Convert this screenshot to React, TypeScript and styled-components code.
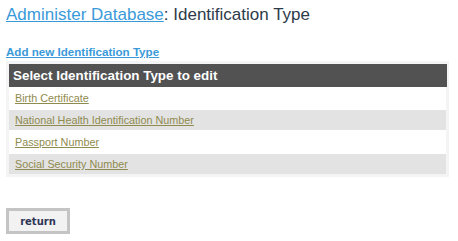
import styled, { createGlobalStyle } from 'styled-components'

const GlobalStyle = createGlobalStyle`
    body{
        margin: 0;
        background: #fff;
        font-family: "Liberation Sans", Arial, sans-serif;
    }
`

const Page = styled.div`
    padding: 4px 6px 0 6px;
    width: 443px;
`

const Title = styled.h1`
    margin: 0;
    font-size: 17px;
    font-weight: normal;
    line-height: 22px;
    color: #2d3a4a;

    a{
        color: #3a9ad9;
        text-decoration: underline;
    }
`

const AddLink = styled.a`
    display: block;
    width: max-content;
    margin-top: 19px;
    font-size: 11.6px;
    font-weight: bold;
    line-height: 14px;
    color: #3a9ad9;
    text-decoration: underline;
`

const ListBox = styled.div`
    margin-top: 2px;
    background: #f4f4f4;
    padding: 3px;
`

const ListHeader = styled.div`
    background: #525252;
    color: #fff;
    font-size: 13.4px;
    font-weight: bold;
    height: 23px;
    line-height: 23px;
    padding-left: 4px;
    margin-right: -1px;
`

const Row = styled.div<{ $odd: boolean }>`
    background: ${p => p.$odd ? '#e3e3e3' : '#fff'};
    height: ${p => p.$odd ? '20px' : '23px'};
    line-height: ${p => p.$odd ? '20px' : '23px'};
    padding-left: 6px;
    font-size: 10.8px;

    &:nth-child(4){
        height: 24px;
        line-height: 24px;
    }

    a{
        color: #8f8a4e;
        text-decoration: underline;
    }
`

const ReturnButton = styled.button`
    margin-top: 31px;
    width: 64px;
    height: 26px;
    background: #f2f2f2;
    border: 3px solid #c4c4c4;
    font-family: "DejaVu Sans", Verdana, sans-serif;
    font-size: 10px;
    font-weight: bold;
    color: #2f3556;
    padding: 0;
    display: block;
`

const types = [
    'Birth Certificate',
    'National Health Identification Number',
    'Passport Number',
    'Social Security Number',
]

const App = () => {
    return (
        <>
            <GlobalStyle />
            <Page>
                <Title><a href="#">Administer Database</a>: Identification Type</Title>
                <AddLink href="#">Add new Identification Type</AddLink>
                <ListBox>
                    <ListHeader>Select Identification Type to edit</ListHeader>
                    {types.map((t, i) => (
                        <Row key={t} $odd={i % 2 === 1}>
                            <a href="#">{t}</a>
                        </Row>
                    ))}
                </ListBox>
                <ReturnButton>return</ReturnButton>
            </Page>
        </>
    )
}

export default App
